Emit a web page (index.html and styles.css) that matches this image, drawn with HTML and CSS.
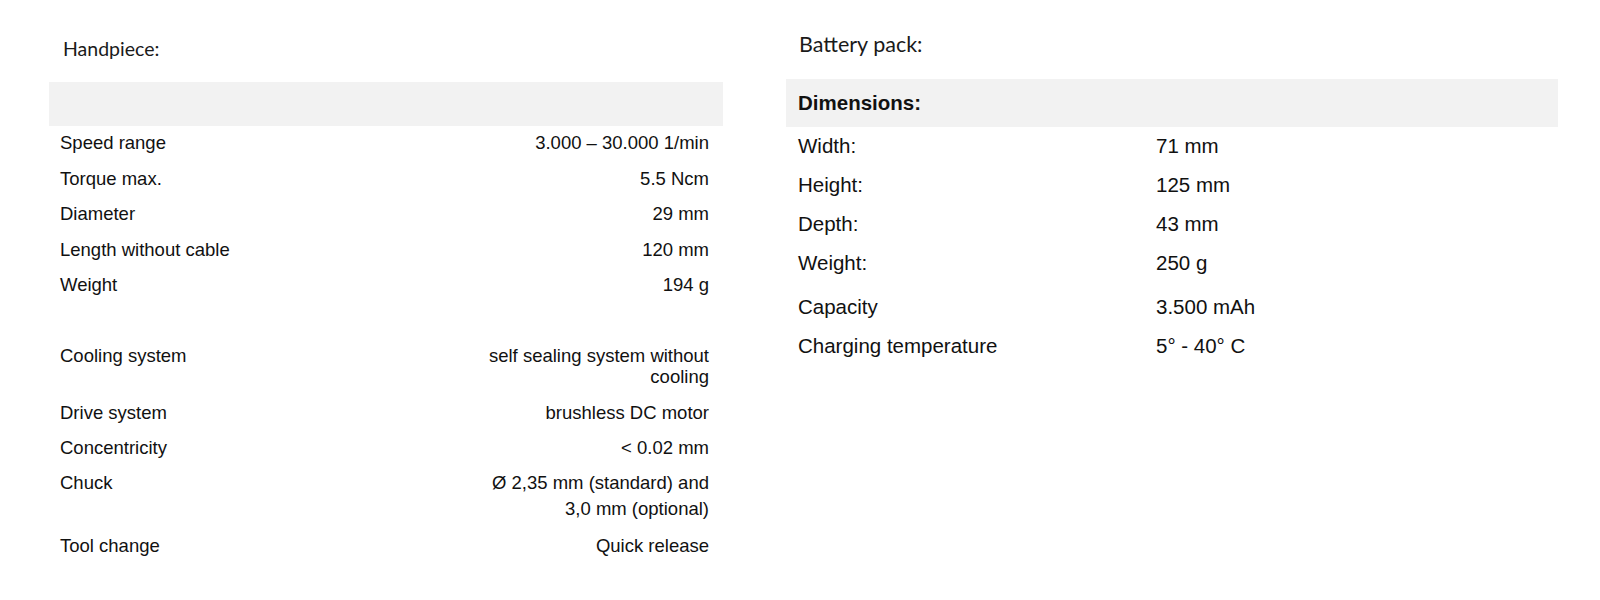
FILE: index.html
```html
<!DOCTYPE html>
<html>
<head>
<meta charset="utf-8">
<link rel="stylesheet" href="styles.css">
</head>
<body>
<div class="page">
  <section class="panel left">
    <div class="heading">Handpiece:</div>
    <div class="band"></div>
    <div class="row"><span class="label">Speed range</span><span class="value">3.000 – 30.000 1/min</span></div>
    <div class="row"><span class="label">Torque max.</span><span class="value">5.5 Ncm</span></div>
    <div class="row"><span class="label">Diameter</span><span class="value">29 mm</span></div>
    <div class="row"><span class="label">Length without cable</span><span class="value">120 mm</span></div>
    <div class="row"><span class="label">Weight</span><span class="value">194 g</span></div>
    <div class="row empty"></div>
    <div class="row"><span class="label">Cooling system</span><span class="value">self sealing system without<br>cooling</span></div>
    <div class="row"><span class="label">Drive system</span><span class="value">brushless DC motor</span></div>
    <div class="row"><span class="label">Concentricity</span><span class="value">&lt; 0.02 mm</span></div>
    <div class="row chuck"><span class="label">Chuck</span><span class="value">Ø 2,35 mm (standard) and<br>3,0 mm (optional)</span></div>
    <div class="row"><span class="label">Tool change</span><span class="value">Quick release</span></div>
  </section>
  <section class="panel right">
    <div class="heading">Battery pack:</div>
    <div class="band">Dimensions:</div>
    <div class="brow"><span class="blabel">Width:</span><span class="bvalue">71 mm</span></div>
    <div class="brow"><span class="blabel">Height:</span><span class="bvalue">125 mm</span></div>
    <div class="brow"><span class="blabel">Depth:</span><span class="bvalue">43 mm</span></div>
    <div class="brow tall"><span class="blabel">Weight:</span><span class="bvalue">250 g</span></div>
    <div class="brow"><span class="blabel">Capacity</span><span class="bvalue">3.500 mAh</span></div>
    <div class="brow"><span class="blabel">Charging temperature</span><span class="bvalue">5° - 40° C</span></div>
  </section>
</div>
</body>
</html>
```
FILE: styles.css
```css
html, body {
  margin: 0;
  padding: 0;
  background: #ffffff;
}
.page {
  display: flex;
  align-items: flex-start;
  color: #111;
  font-family: "Liberation Sans", Arial, sans-serif;
}
.panel.left {
  margin-left: 49px;
  width: 674px;
  font-size: 18.5px;
}
.panel.right {
  margin-left: 63px;
  width: 772px;
  font-size: 20.5px;
}
.heading {
  font-family: Lato, "Open Sans", sans-serif;
  line-height: 24px;
  color: #1a1a1a;
}
.left .heading {
  font-size: 19.5px;
  padding: 37px 14px 21px;
}
.right .heading {
  font-size: 21.5px;
  padding: 32px 13px 23px;
}
.band {
  background: #f2f2f2;
}
.left .band {
  height: 44px;
}
.right .band {
  height: 48px;
  line-height: 48px;
  font-weight: bold;
  padding-left: 12px;
}
.row {
  display: flex;
  justify-content: space-between;
  align-items: flex-start;
  padding: 6px 14px 8.5px 11px;
  line-height: 21px;
  min-height: 21px;
}
.row.chuck {
  padding-top: 3px;
  padding-bottom: 7px;
  line-height: 26px;
}
.value {
  text-align: right;
}
.brow {
  display: grid;
  grid-template-columns: 370px 1fr;
  padding: 7px 0 8px;
  line-height: 24px;
}
.brow.tall {
  padding-bottom: 13px;
}
.blabel {
  padding-left: 12px;
}
```
